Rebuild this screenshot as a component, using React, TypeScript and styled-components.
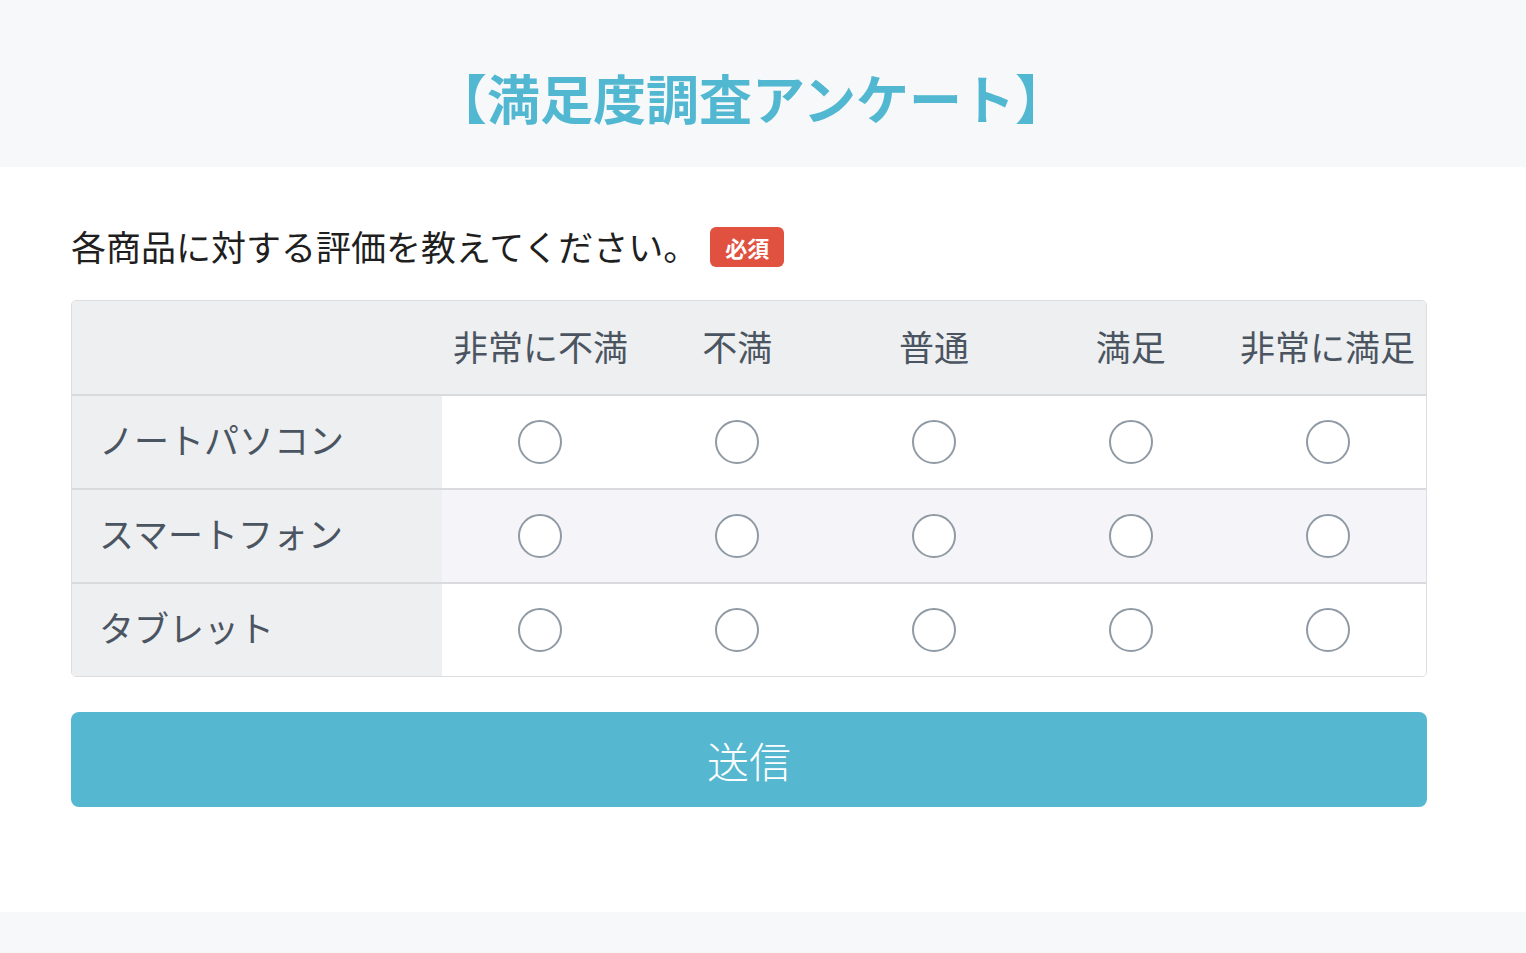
import React from "react";
import styled, { createGlobalStyle } from "styled-components";

const Global = createGlobalStyle`
  html, body { margin: 0; padding: 0; background: #ffffff; }
  body { font-family: "Noto Sans CJK JP", "Noto Sans", sans-serif; }
  * { box-sizing: border-box; }
`;

const Page = styled.div`
  display: flex;
  flex-direction: column;
  min-height: 953px;
  background: #f7f8fa;
`;

const Header = styled.header`
  height: 167px;
  display: flex;
  align-items: center;
  justify-content: center;
  background: #f7f8fa;
`;

const Title = styled.h1`
  margin: 0;
  font-size: 53px;
  font-weight: 700;
  color: #52b8d1;
  letter-spacing: 0;
  padding-top: 26px;
  padding-right: 24px;
`;

const Main = styled.main`
  background: #ffffff;
  height: 745px;
  padding: 54px 99px 0 71px;
`;

const Question = styled.div`
  display: flex;
  align-items: center;
  gap: 12px;
  height: 48px;
  font-size: 35px;
  color: #1f1f1f;
  margin-bottom: 31px;
`;

const Badge = styled.span`
  display: inline-flex;
  align-items: center;
  justify-content: center;
  width: 74px;
  height: 40px;
  border-radius: 6px;
  background: #e0513f;
  color: #ffffff;
  font-size: 22px;
  font-weight: 700;
  margin-top: 4px;
`;

const Table = styled.div`
  width: 1356px;
  border: 1px solid #dcdddf;
  border-radius: 5px;
  overflow: hidden;
`;

const Row = styled.div<{ $bg: string; $header?: boolean }>`
  display: grid;
  grid-template-columns: 370px repeat(5, 1fr);
  height: ${(p) => (p.$header ? "93px" : "94px")};
  background: ${(p) => p.$bg};
  & + & {
    border-top: 2px solid #d9dadc;
  }
`;

const HeadCell = styled.div`
  display: flex;
  align-items: center;
  justify-content: center;
  font-size: 35px;
  color: #4b5561;
  white-space: nowrap;
  padding-bottom: 4px;
`;

const Label = styled.div`
  display: flex;
  align-items: center;
  padding-left: 27px;
  padding-bottom: 8px;
  background: #eeeff1;
  font-size: 35px;
  color: #4b5561;
`;

const Cell = styled.label`
  display: flex;
  align-items: center;
  justify-content: center;
`;

const Radio = styled.input.attrs({ type: "radio" })`
  appearance: none;
  -webkit-appearance: none;
  margin: 0;
  width: 44px;
  height: 44px;
  border-radius: 50%;
  border: 2px solid #8f9aa5;
  background: #ffffff;
  cursor: pointer;
`;

const Submit = styled.button`
  margin-top: 35px;
  width: 1356px;
  height: 95px;
  border: none;
  border-radius: 8px;
  background: #55b8d0;
  color: #ffffff;
  font-family: "Noto Sans CJK JP", sans-serif;
  font-size: 42px;
  font-weight: 300;
  cursor: pointer;
`;

const Footer = styled.footer`
  flex: 1;
  background: #f7f8fa;
`;

const levels = ["非常に不満", "不満", "普通", "満足", "非常に満足"];
const products = ["ノートパソコン", "スマートフォン", "タブレット"];

export default function App() {
  return (
    <>
      <Global />
      <Page>
        <Header>
          <Title>【満足度調査アンケート】</Title>
        </Header>
        <Main>
          <Question>
            各商品に対する評価を教えてください。
            <Badge>必須</Badge>
          </Question>
          <Table>
            <Row $bg="#eeeff1" $header>
              <div />
              {levels.map((l) => (
                <HeadCell key={l}>{l}</HeadCell>
              ))}
            </Row>
            {products.map((p, i) => (
              <Row key={p} $bg={i % 2 === 1 ? "#f5f5f9" : "#ffffff"}>
                <Label>{p}</Label>
                {levels.map((l) => (
                  <Cell key={l}>
                    <Radio name={p} value={l} />
                  </Cell>
                ))}
              </Row>
            ))}
          </Table>
          <Submit>送信</Submit>
        </Main>
        <Footer />
      </Page>
    </>
  );
}
